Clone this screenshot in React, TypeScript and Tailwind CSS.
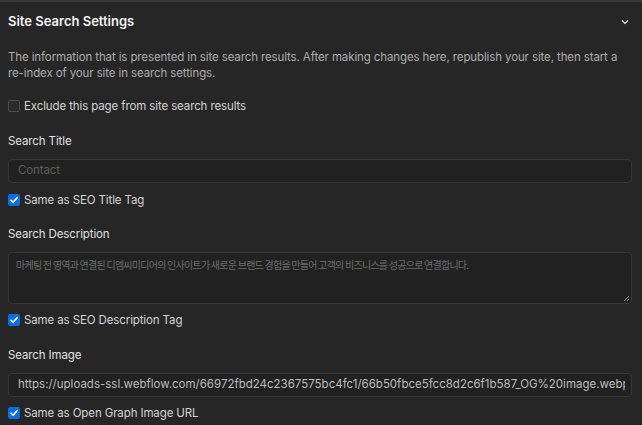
import React from "react";

function Check({ checked }: { checked: boolean }) {
  return checked ? (
    <span className="flex h-3 w-3 shrink-0 items-center justify-center rounded-[2px] bg-[#0a6de0]">
      <svg width="10" height="10" viewBox="0 0 10 10" fill="none">
        <path d="M2 5.2 L4.1 7.3 L8.2 2.6" stroke="#ffffff" strokeWidth="1.6" strokeLinecap="round" strokeLinejoin="round" />
      </svg>
    </span>
  ) : (
    <span className="block h-3 w-3 shrink-0 rounded-[2px] border border-[#4d4d4d] bg-[#2a2a2a]" />
  );
}

function CheckRow({ checked, label }: { checked: boolean; label: string }) {
  return (
    <div className="flex items-center gap-[4px] h-4">
      <Check checked={checked} />
      <span className="text-[11.5px] tracking-[-0.01em] leading-4 text-[#d4d4d4]">{label}</span>
    </div>
  );
}

export default function App() {
  return (
    <div
      className="w-[642px] h-[425px] overflow-hidden bg-[#262626] border-t-2 border-[#383838]"
      style={{ fontFamily: "Inter, 'Noto Sans CJK KR', sans-serif" }}
    >
      <div className="flex items-center justify-between pl-2 pr-[13px] h-[40px]">
        <span className="text-[13px] font-semibold text-[#f2f2f2]">Site Search Settings</span>
        <svg width="8" height="6" viewBox="0 0 8 6" fill="none">
          <path d="M1 1.5 L4 4.5 L7 1.5" stroke="#e6e6e6" strokeWidth="1.2" />
        </svg>
      </div>
      <div className="px-2 pr-[10px]">
        <p className="text-[11.5px] tracking-[-0.01em] leading-4 text-[#adadad] mt-[7px] pr-[4px]">
          The information that is presented in site search results. After making changes here, republish your site, then start a re-index of your site in search settings.
        </p>
        <div className="mt-[17px]">
          <CheckRow checked={false} label="Exclude this page from site search results" />
        </div>
        <div className="mt-[19px] text-[11.5px] tracking-[-0.01em] leading-4 text-[#e0e0e0]">Search Title</div>
        <div className="mt-[10px] h-[24px] rounded-[4px] border border-[#363636] bg-[#212121] px-[9px] flex items-center text-[11.5px] tracking-[-0.01em] text-[#5e5e5e]">
          Contact
        </div>
        <div className="mt-[9px]">
          <CheckRow checked={true} label="Same as SEO Title Tag" />
        </div>
        <div className="mt-[18px] text-[11.5px] tracking-[-0.01em] leading-4 text-[#e0e0e0]">Search Description</div>
        <div className="relative mt-[10px] h-[52px] rounded-[4px] border border-[#363636] bg-[#212121] px-[7px] pt-[4px] text-[10px] tracking-[-0.075em] leading-4 text-[#6e6e6e]" style={{ fontFamily: "'Noto Sans CJK KR', sans-serif" }}>
          마케팅 전 영역과 연결된 디엠씨미디어의 인사이트가 새로운 브랜드 경험을 만들어 고객의 비즈니스를 성공으로 연결합니다.
          <svg className="absolute right-[1px] bottom-[1px]" width="7" height="7" viewBox="0 0 7 7">
            <path d="M6 1 L1 6 M6 4 L4 6" stroke="#9a9a9a" strokeWidth="1" />
          </svg>
        </div>
        <div className="mt-[8px]">
          <CheckRow checked={true} label="Same as SEO Description Tag" />
        </div>
        <div className="mt-[19px] text-[11.5px] tracking-[-0.01em] leading-4 text-[#e0e0e0]">Search Image</div>
        <div className="mt-[10px] h-[24px] rounded-[4px] border border-[#363636] bg-[#212121] pl-[9px] pr-[6px] flex items-center overflow-hidden whitespace-nowrap text-[11.5px] text-[#bdbdbd]">
          <span className="overflow-hidden">https://uploads-ssl.webflow.com/66972fbd24c2367575bc4fc1/66b50fbce5fcc8d2c6f1b587_OG%20image.webp</span>
        </div>
        <div className="mt-[8px]">
          <CheckRow checked={true} label="Same as Open Graph Image URL" />
        </div>
      </div>
    </div>
  );
}
